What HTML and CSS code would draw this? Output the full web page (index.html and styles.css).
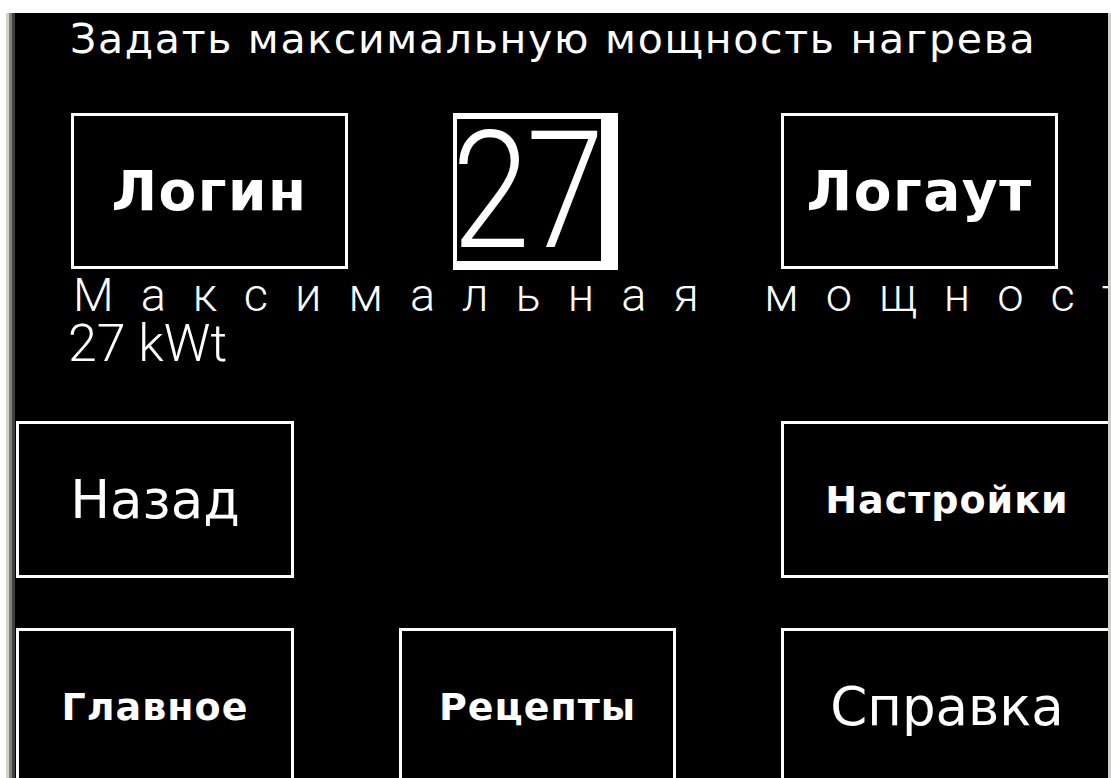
FILE: index.html
```html
<!DOCTYPE html>
<html lang="ru">
<head>
<meta charset="utf-8">
<title>Мощность нагрева</title>
<link rel="stylesheet" href="styles.css">
</head>
<body>
<div class="frame">
  <div class="screen">
    <h1 class="title">Задать максимальную мощность нагрева</h1>

    <div class="top-row">
      <div class="btn btn-lg">Логин</div>
      <div class="display">
        <div class="display-inner"><span class="digits">27</span></div>
      </div>
      <div class="btn btn-lg btn-logout">Логаут</div>
    </div>

    <div class="info">
      <div class="info-label">Максимальная мощность</div>
      <div class="info-value">27 kWt</div>
    </div>

    <div class="nav">
      <div class="btn btn-big">Назад</div>
      <div class="nav-empty"></div>
      <div class="btn btn-bold">Настройки</div>
      <div class="btn btn-bold">Главное</div>
      <div class="btn btn-bold">Рецепты</div>
      <div class="btn btn-big">Справка</div>
    </div>
  </div>
</div>
</body>
</html>
```

FILE: styles.css
```css
html, body {
  margin: 0;
  padding: 0;
  background: #ffffff;
  overflow: hidden;
}

/* window frame around the panel screen */
.frame {
  margin: 13px 0 0 6px;
  width: 1105px;
  height: 765px;
  box-sizing: border-box;
  border-left: 3px solid #d4d0c8;
  border-right: 3px solid #d4d0c8;
}

.screen {
  height: 100%;
  box-sizing: border-box;
  border-left: 3px solid #808080;
  padding-left: 3px;
  box-shadow: inset 3px 0 0 #404040;
  background: #000;
  color: #fff;
  overflow: hidden;
  font-family: "DejaVu Sans", Verdana, sans-serif;
}

.title {
  margin: 0;
  padding: 3px 0 1px 55px;
  font-size: 41px;
  line-height: 47px;
  font-weight: 400;
  letter-spacing: 1.7px;
  white-space: nowrap;
}

/* buttons: white outline boxes */
.btn {
  box-sizing: border-box;
  border: 3px solid #fff;
  background: #000;
  color: #fff;
  display: flex;
  align-items: center;
  justify-content: center;
  white-space: nowrap;
}

.top-row {
  display: flex;
  align-items: flex-start;
  margin-top: 49px;
  padding-left: 56px;
}

.btn-lg {
  width: 277px;
  height: 156px;
  font-size: 55px;
  font-weight: 700;
  letter-spacing: 1.5px;
}

.btn-logout {
  margin-left: 163px;
}

/* numeric value display */
.display {
  margin-left: 105px;
  width: 165px;
  height: 157px;
  box-sizing: border-box;
  padding: 6px 17px 9px 4px;
  background: #fff;
}

.display-inner {
  width: 100%;
  height: 100%;
  background: #000;
  overflow: hidden;
}

.digits {
  display: block;
  font-family: Roboto, "Liberation Sans", sans-serif;
  font-weight: 300;
  font-size: 163px;
  line-height: 146px;
  letter-spacing: -4px;
  margin-left: -5px;
  transform: scaleX(0.86);
  transform-origin: 0 0;
  white-space: nowrap;
}

.info {
  padding-left: 53px;
  font-family: Roboto, "Liberation Sans", sans-serif;
  font-weight: 300;
}

.info-label {
  margin-left: 5px;
  font-size: 47px;
  line-height: 50px;
  letter-spacing: 27px;
  white-space: nowrap;
}

.info-value {
  font-size: 52px;
  line-height: 48px;
}

/* navigation buttons */
.nav {
  display: grid;
  grid-template-columns: 278px 277px 332px;
  grid-auto-rows: 157px;
  column-gap: 105px;
  row-gap: 50px;
  margin-top: 53px;
  margin-left: 1px;
}

.btn-big {
  font-size: 53px;
  font-weight: 400;
}

.btn-bold {
  font-size: 38px;
  font-weight: 700;
  letter-spacing: 1px;
}
```
